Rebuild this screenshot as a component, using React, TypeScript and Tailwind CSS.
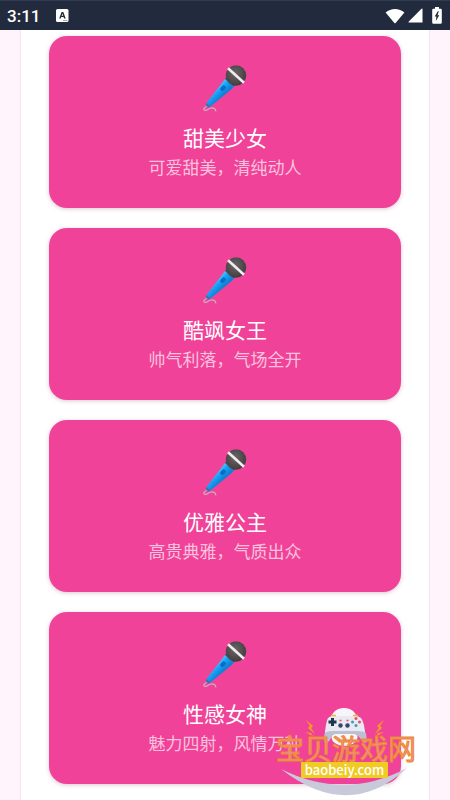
interface VoiceCardProps {
  title: string;
  description: string;
}

const voices: VoiceCardProps[] = [
  { title: '甜美少女', description: '可爱甜美，清纯动人' },
  { title: '酷飒女王', description: '帅气利落，气场全开' },
  { title: '优雅公主', description: '高贵典雅，气质出众' },
  { title: '性感女神', description: '魅力四射，风情万种' },
];

function StatusBar() {
  return (
    <header className="flex h-[30px] items-center border-t border-[#303a50] bg-[#222b3d] pr-2 pl-[7px] text-white">
      <span className="font-[Roboto,sans-serif] text-[17px] leading-5 font-medium">3:11</span>
      <svg className="ml-4 h-[13px] w-[13px]" viewBox="0 0 13 13" aria-hidden="true">
        <rect width="12.5" height="13" rx="1.5" fill="#fff" />
        <path d="M3.2 9.6 5.6 3h1.7l2.4 6.6H8.1L7.6 8.1H5.2l-.5 1.5ZM5.7 6.8h1.5l-.8-2.3Z" fill="#222b3d" />
        <path d="M7 11.5h4.5" stroke="#8b93a2" strokeWidth="0.8" />
      </svg>
      <div className="ml-auto flex items-center">
        <svg className="h-4 w-5" viewBox="0 0 20 16" aria-hidden="true">
          <path d="M.6 4.4C5.8-.3 14.2-.3 19.4 4.4L10.6 15q-.6.6-1.2 0Z" fill="#fff" />
        </svg>
        <svg className="ml-[3px] h-[15px] w-[15px]" viewBox="0 0 15 15" aria-hidden="true">
          <path d="M14.5 1v13.5H.8q-.8 0-.2-.7L13.5.7q1-.7 1 .3Z" fill="#fff" />
        </svg>
        <svg className="ml-[9px] h-[17px] w-[10px]" viewBox="0 0 10 17" aria-hidden="true">
          <path d="M3 0h4v1.7h1.6q1.2 0 1.2 1.2v12.6q0 1.2-1.2 1.2H1.4q-1.2 0-1.2-1.2V2.9q0-1.2 1.2-1.2H3Z" fill="#fff" />
          <path d="M5.8 4.2 2.7 9.5h1.7L3.8 14l3.5-5.7H5.5l1.3-4.1Z" fill="#222b3d" />
        </svg>
      </div>
    </header>
  );
}

function Microphone() {
  return (
    <svg className="h-12 w-[46px]" viewBox="0 0 46 48" aria-hidden="true">
      <defs>
        <linearGradient id="mic-body" x1="13" y1="25" x2="20" y2="32" gradientUnits="userSpaceOnUse">
          <stop offset="0" stopColor="#4cc4fb" />
          <stop offset="0.4" stopColor="#16a5f7" />
          <stop offset="1" stopColor="#1180d8" />
        </linearGradient>
        <radialGradient id="mic-head" cx="0.45" cy="0.4" r="0.6">
          <stop offset="0" stopColor="#6c6666" />
          <stop offset="1" stopColor="#403e40" />
        </radialGradient>
      </defs>
      <path d="M4.5 42.5C2 43.5.8 46 3 46.3c2.600.3 3.600-2.500 6.800-2.500 2.200 0 3.700 1 4 3" fill="none" stroke="#cdaec4" strokeWidth="1.3" strokeLinecap="round" />
      <path d="m23 15 8.800 7.500-2 2.600L8 42.800q-1.400.9-3-.4-1.700-1.500-.7-3.200L21.500 17Z" fill="url(#mic-body)" />
      <path d="m4.500 39 3.900 3.500q-1.700 1.400-3.400-.1-1.600-1.400-.5-3.400Z" fill="#3377a8" />
      <rect x="18.4" y="22.6" width="5.2" height="3.2" rx="1.5" transform="rotate(-47 21 24.2)" fill="#0c6cc4" stroke="#0b5bab" strokeWidth="0.6" />
      <path d="m23 15 8.800 7.500 1.400-1-9-8.500Z" fill="#3f5a70" />
      <circle cx="34" cy="11.5" r="10.2" fill="url(#mic-head)" />
      <path d="m26 4.200 16 14.600" stroke="#f1ecef" strokeWidth="2.6" />
    </svg>
  );
}

function VoiceCard({ title, description }: VoiceCardProps) {
  return (
    <button
      type="button"
      className="flex h-[172px] w-full flex-col items-center rounded-[18px] bg-[#f04298] pt-7 text-white shadow-[0_1px_4px_rgba(150,60,110,0.3)]"
    >
      <Microphone />
      <span className="mt-[11px] text-[21px] leading-7">{title}</span>
      <span className="mt-1 text-[17px] leading-6 text-[#fbc2df]">{description}</span>
    </button>
  );
}

function GamepadLogo() {
  return (
    <svg className="absolute inset-0 h-full w-full" viewBox="0 0 140 92" aria-hidden="true">
      <path d="M5 61q64 32 126-1-58 54-126 1Z" fill="#c9cad9" />
      <path d="M54 12q3-12 14-12t14 12Z" fill="#f5f5fa" />
      <ellipse cx="68.5" cy="29" rx="13" ry="9" fill="#f7f6fa" />
      <path d="M52 10q2-2 5-2h22q4 0 6 2 3 4 4 14l1 9q-4 1-6-4-2-4-6-4H59q-4 0-5 4-2 5-6 4l1-9q1-10 3-14Z" fill="#e9eaf1" />
      <path d="m49 25-1 9q4 2 7-4 1-3 4-4h19q4 1 6 4 3 6 7 4l-1-9q-3-2-8-2H57q-6 0-8 2Z" fill="#bdbfd2" />
      <path d="M56.500 10v8M52.500 14h8" stroke="#1f3550" strokeWidth="3" />
      <g fill="#e64f62">
        <circle cx="80" cy="10.5" r="1.5" />
        <circle cx="83.5" cy="14" r="1.5" />
      </g>
      <g fill="#3f9bb5">
        <circle cx="76.5" cy="14" r="1.5" />
        <circle cx="80" cy="17.5" r="1.5" />
      </g>
      <g fill="#334668">
        <circle cx="64.5" cy="17.5" r="2.2" />
        <circle cx="71.5" cy="17.5" r="2.2" />
      </g>
      <path d="M63.500 12.500h2M70.500 12.500h2" stroke="#e64f62" strokeWidth="1.5" />
      <path d="M55 7.500h5M77 7.500h5" stroke="#efb43b" strokeWidth="1.5" />
      <g fill="#f6a01c">
        <path d="m30 12 7 6-2 2 4 6-7-6 2-2ZM29 24l6 1 1 2 3 1-5-1-1-1Z" />
        <path d="m108 12-7 6 2 2-4 6 7-6-2-2ZM108 24l-6 1-1 2-3 1 5-1 1-1Z" />
      </g>
    </svg>
  );
}

function Watermark() {
  return (
    <div className="pointer-events-none absolute right-[34px] bottom-0 h-[92px] w-[140px]">
      <GamepadLogo />
      <div className="relative flex flex-col items-center pt-[26px] whitespace-nowrap">
        <span className="text-[28px] leading-7 text-[#f58ba0] [-webkit-text-stroke:1px_#ec8c1c]">宝贝游戏网</span>
        <span className="mr-[3px] h-4 bg-[#efcb24] px-1 text-[13px] leading-[15px] font-medium text-white">
          baobeiy.com
        </span>
      </div>
    </div>
  );
}

export default function App() {
  return (
    <div className="relative flex min-h-screen flex-col bg-[#fff4fb] font-['Noto_Sans_CJK_SC',sans-serif]">
      <StatusBar />
      <main className="mx-5 flex flex-1 flex-col gap-5 border-x border-[#f3e5ed] bg-white px-7 pt-[6px] pb-4">
        {voices.map((voice) => (
          <VoiceCard key={voice.title} {...voice} />
        ))}
      </main>
      <Watermark />
    </div>
  );
}
